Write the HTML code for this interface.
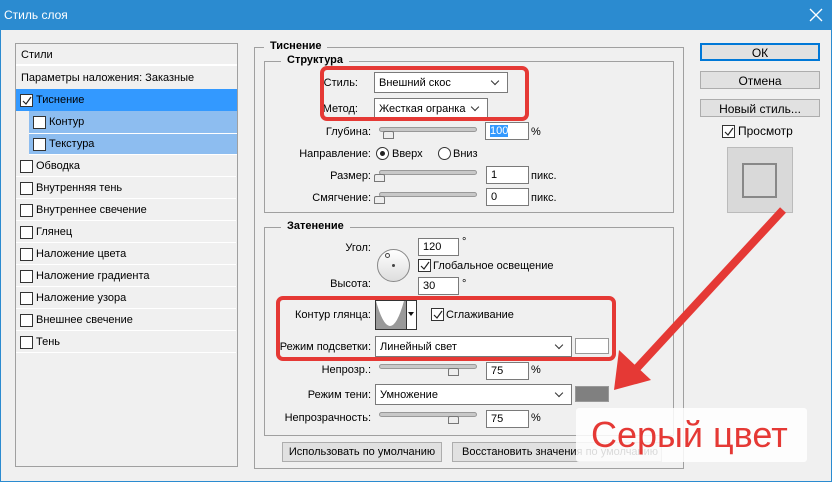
<!DOCTYPE html>
<html><head><meta charset="utf-8"><style>
*{box-sizing:border-box;margin:0;padding:0}
body{width:832px;height:482px;background:#f0f0f0;font-family:"Liberation Sans","DejaVu Sans",sans-serif;font-size:11px;color:#000;position:relative;overflow:hidden;border:1px solid #2b8bd0;border-top:none}
.a{position:absolute;white-space:nowrap}
.tb{left:0;top:0;width:832px;height:30px;background:#2b8bd0;color:#fff;font-size:12px;padding:8px 0 0 3px}
.box{position:absolute;border:1px solid #a0a0a0}
.row{position:absolute;left:1px;width:220px;height:22px;border-bottom:1px solid #fff;padding:5px 0 0 19px}
.cb{position:absolute;width:13px;height:13px;border:1px solid #333;background:#fff}
.lbl{text-align:right}
.inp{position:absolute;background:#fff;border:1px solid #7a7a7a;height:18px;padding:2px 0 0 4px}
.sel{position:absolute;background:#fff;border:1px solid #7a7a7a;height:21px;padding:4px 0 0 4px}
.sel:after{content:"";position:absolute;right:9px;top:5px;width:5px;height:5px;border-right:1px solid #333;border-bottom:1px solid #333;transform:rotate(45deg)}
.sl{position:absolute;height:5px;background:#c8c8c8;border:1px solid #999;border-radius:3px}
.th{position:absolute;width:11px;height:8px;background:#eee;border:1px solid #777;border-radius:2px 2px 0 0}
.btn{position:absolute;background:#e1e1e1;border:1px solid #adadad;text-align:center;font-size:12px}
.leg{position:absolute;background:#f0f0f0;padding:0 6px;font-weight:bold}
.red{position:absolute;border:4px solid #e53935;border-radius:7px}
</style></head><body>
<div class="a tb">Стиль слоя</div>
<svg class="a" style="left:808px;top:8px" width="14" height="14"><path d="M1 1L13 13M13 1L1 13" stroke="#fff" stroke-width="1.3"/></svg>

<div class="box" style="left:14px;top:43px;width:223px;height:424px"></div>
<div class="a" style="left:15px;top:44px;width:221px;height:22px;border-bottom:2px solid #fff"></div>
<div class="a" style="left:20px;top:49px">Стили</div>
<div class="a" style="left:20px;top:72px">Параметры наложения: Заказные</div>
<div class="a" style="left:15px;top:89px;width:221px;height:22px;background:#3399ff"></div>
<div class="a" style="left:28px;top:111px;width:208px;height:44px;background:#8dbdf0;border-bottom:1px solid #fff"></div>
<div class="a" style="left:28px;top:133px;width:208px;height:1px;background:#fff"></div>
<div class="cb" style="left:19px;top:94px"></div><svg class="a" style="left:20px;top:95px" width="12" height="12"><path d="M2 6L5 9L10 2" stroke="#222" fill="none" stroke-width="1.2"/></svg>
<div class="a" style="left:35px;top:94px">Тиснение</div>
<div class="cb" style="left:32px;top:116px"></div><div class="a" style="left:48px;top:116px">Контур</div>
<div class="cb" style="left:32px;top:138px"></div><div class="a" style="left:48px;top:138px">Текстура</div>
<div class="row" style="left:15px;top:155px;padding-left:20px"><div class="cb" style="left:4px;top:5px"></div>Обводка</div>
<div class="row" style="left:15px;top:177px;padding-left:20px"><div class="cb" style="left:4px;top:5px"></div>Внутренняя тень</div>
<div class="row" style="left:15px;top:199px;padding-left:20px"><div class="cb" style="left:4px;top:5px"></div>Внутреннее свечение</div>
<div class="row" style="left:15px;top:221px;padding-left:20px"><div class="cb" style="left:4px;top:5px"></div>Глянец</div>
<div class="row" style="left:15px;top:243px;padding-left:20px"><div class="cb" style="left:4px;top:5px"></div>Наложение цвета</div>
<div class="row" style="left:15px;top:265px;padding-left:20px"><div class="cb" style="left:4px;top:5px"></div>Наложение градиента</div>
<div class="row" style="left:15px;top:287px;padding-left:20px"><div class="cb" style="left:4px;top:5px"></div>Наложение узора</div>
<div class="row" style="left:15px;top:309px;padding-left:20px"><div class="cb" style="left:4px;top:5px"></div>Внешнее свечение</div>
<div class="row" style="left:15px;top:331px;padding-left:20px"><div class="cb" style="left:4px;top:5px"></div>Тень</div>

<div class="box" style="left:253px;top:47px;width:430px;height:422px"></div>
<div class="leg" style="left:263px;top:40px">Тиснение</div>
<div class="box" style="left:263px;top:61px;width:410px;height:152px"></div>
<div class="leg" style="left:280px;top:54px">Структура</div>
<div class="box" style="left:263px;top:227px;width:410px;height:209px"></div>
<div class="leg" style="left:280px;top:220px">Затенение</div>

<div class="a lbl" style="left:290px;width:67px;top:77px">Стиль:</div>
<div class="sel" style="left:373px;top:72px;width:134px">Внешний скос</div>
<div class="a lbl" style="left:290px;width:67px;top:103px">Метод:</div>
<div class="sel" style="left:373px;top:98px;width:114px">Жесткая огранка</div>
<div class="a lbl" style="left:290px;width:80px;top:126px">Глубина:</div>
<div class="sl" style="left:378px;top:127px;width:98px"></div><div class="th" style="left:382px;top:131px"></div>
<div class="inp" style="left:484px;top:122px;width:44px"><span style="background:#3399ff;color:#fff">100</span></div>
<div class="a" style="left:530px;top:126px">%</div>
<div class="a lbl" style="left:280px;width:90px;top:148px">Направление:</div>
<div class="a" style="left:375px;top:147px;width:13px;height:13px;border:1px solid #333;border-radius:50%;background:#fff"></div>
<div class="a" style="left:379px;top:151px;width:5px;height:5px;border-radius:50%;background:#222"></div>
<div class="a" style="left:391px;top:148px">Вверх</div>
<div class="a" style="left:437px;top:147px;width:13px;height:13px;border:1px solid #333;border-radius:50%;background:#fff"></div>
<div class="a" style="left:452px;top:148px">Вниз</div>
<div class="a lbl" style="left:290px;width:80px;top:170px">Размер:</div>
<div class="sl" style="left:378px;top:170px;width:98px"></div><div class="th" style="left:373px;top:174px"></div>
<div class="inp" style="left:485px;top:166px;width:43px">1</div><div class="a" style="left:530px;top:170px">пикс.</div>
<div class="a lbl" style="left:290px;width:80px;top:192px">Смягчение:</div>
<div class="sl" style="left:378px;top:192px;width:98px"></div><div class="th" style="left:373px;top:196px"></div>
<div class="inp" style="left:485px;top:188px;width:43px">0</div><div class="a" style="left:530px;top:192px">пикс.</div>

<div class="a lbl" style="left:300px;width:70px;top:242px">Угол:</div>
<div class="a" style="left:376px;top:249px;width:33px;height:33px;border:1px solid #888;border-radius:50%;background:linear-gradient(#fff,#ddd)"></div>
<div class="a" style="left:384px;top:253px;width:5px;height:5px;border:1px solid #444;border-radius:50%"></div>
<div class="a" style="left:391px;top:264px;width:3px;height:3px;background:#444;border-radius:50%"></div>
<div class="inp" style="left:417px;top:238px;width:41px">120</div><div class="a" style="left:461px;top:236px">°</div>
<div class="cb" style="left:417px;top:259px"></div><svg class="a" style="left:418px;top:260px" width="12" height="12"><path d="M2 6L5 9L10 2" stroke="#222" fill="none" stroke-width="1.2"/></svg>
<div class="a" style="left:432px;top:260px">Глобальное освещение</div>
<div class="a lbl" style="left:300px;width:70px;top:278px">Высота:</div>
<div class="inp" style="left:417px;top:277px;width:41px">30</div><div class="a" style="left:461px;top:278px">°</div>

<div class="a lbl" style="left:280px;width:90px;top:309px">Контур глянца:</div>
<div class="a" style="left:374px;top:300px;width:42px;height:30px;border:1px solid #333;background:#999;overflow:hidden"><svg width="30" height="28"><path d="M0 0Q14 50 28 0Z" fill="#fff"/></svg></div>
<div class="a" style="left:405px;top:300px;width:11px;height:30px;background:#fff;border:1px solid #333"></div>
<div class="a" style="left:407px;top:312px;border:3px solid transparent;border-top:4px solid #111"></div>
<div class="cb" style="left:430px;top:308px"></div><svg class="a" style="left:431px;top:309px" width="12" height="12"><path d="M2 6L5 9L10 2" stroke="#222" fill="none" stroke-width="1.2"/></svg>
<div class="a" style="left:445px;top:309px">Сглаживание</div>
<div class="a lbl" style="left:270px;width:100px;top:341px">Режим подсветки:</div>
<div class="sel" style="left:374px;top:336px;width:197px">Линейный свет</div>
<div class="a" style="left:574px;top:338px;width:34px;height:16px;background:#fff;border:1px solid #999"></div>
<div class="a lbl" style="left:280px;width:90px;top:364px">Непрозр.:</div>
<div class="sl" style="left:378px;top:364px;width:98px"></div><div class="th" style="left:447px;top:368px"></div>
<div class="inp" style="left:485px;top:362px;width:43px">75</div><div class="a" style="left:530px;top:364px">%</div>
<div class="a lbl" style="left:280px;width:90px;top:389px">Режим тени:</div>
<div class="sel" style="left:374px;top:384px;width:197px">Умножение</div>
<div class="a" style="left:574px;top:386px;width:34px;height:16px;background:#808080;border:1px solid #999"></div>
<div class="a lbl" style="left:270px;width:100px;top:412px">Непрозрачность:</div>
<div class="sl" style="left:378px;top:412px;width:98px"></div><div class="th" style="left:447px;top:416px"></div>
<div class="inp" style="left:485px;top:410px;width:43px">75</div><div class="a" style="left:530px;top:412px">%</div>

<div class="btn" style="left:281px;top:442px;width:160px;height:20px;font-size:11px;padding-top:3px">Использовать по умолчанию</div>
<div class="btn" style="left:451px;top:442px;width:210px;height:20px;font-size:11px;padding-top:3px;text-align:left;padding-left:9px">Восстановить значения по умолчанию</div>

<div class="btn" style="left:699px;top:43px;width:120px;height:18px;border:2px solid #0078d7;padding-top:1px">ОК</div>
<div class="btn" style="left:699px;top:71px;width:120px;height:18px;padding-top:2px">Отмена</div>
<div class="btn" style="left:699px;top:99px;width:120px;height:18px;padding-top:2px">Новый стиль...</div>
<div class="cb" style="left:721px;top:125px"></div><svg class="a" style="left:722px;top:126px" width="12" height="12"><path d="M2 6L5 9L10 2" stroke="#222" fill="none" stroke-width="1.2"/></svg>
<div class="a" style="left:737px;top:124px;font-size:12px">Просмотр</div>
<div class="a" style="left:726px;top:147px;width:66px;height:66px;background:#d9d9d9;border:1px solid #bbb"></div>
<div class="a" style="left:741px;top:163px;width:35px;height:35px;border:2px solid #888"></div>

<div class="red" style="left:319px;top:66px;width:209px;height:55px"></div>
<div class="red" style="left:275px;top:296px;width:340px;height:65px"></div>
<svg class="a" style="left:0;top:0" width="832" height="482"><line x1="782" y1="210" x2="636" y2="368" stroke="#e53935" stroke-width="8"/><polygon points="613,390 618,350 650,380" fill="#e53935"/></svg>
<div class="a" style="left:575px;top:408px;width:231px;height:54px;background:rgba(255,255,255,0.85);border-radius:3px"></div>
<div class="a" style="left:590px;top:414px;font-size:36px;color:#e53935">Серый цвет</div>
</body></html>
